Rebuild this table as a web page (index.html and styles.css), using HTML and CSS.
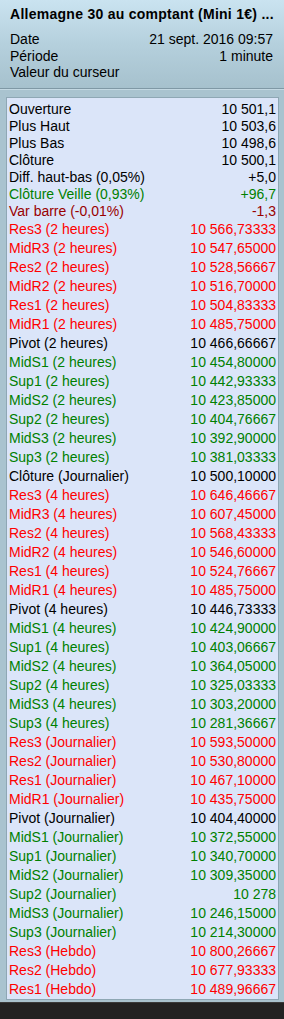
FILE: index.html
```html
<!DOCTYPE html>
<html>
<head>
<meta charset="utf-8">
<link rel="stylesheet" href="styles.css">
</head>
<body>
<div class="window">
  <div class="header">
    <div class="title">Allemagne 30 au comptant (Mini 1€) ...</div>
    <div class="hrow"><span>Date</span><span>21 sept. 2016 09:57</span></div>
    <div class="hrow"><span>Période</span><span>1 minute</span></div>
    <div class="hrow"><span>Valeur du curseur</span><span></span></div>
  </div>
  <div class="panel">
    <div class="box">
      <div class="row s k"><span>Ouverture</span><span>10 501,1</span></div>
      <div class="row s k"><span>Plus Haut</span><span>10 503,6</span></div>
      <div class="row s k"><span>Plus Bas</span><span>10 498,6</span></div>
      <div class="row s k"><span>Clôture</span><span>10 500,1</span></div>
      <div class="row s k"><span>Diff. haut-bas (0,05%)</span><span>+5,0</span></div>
      <div class="row s g"><span>Clôture Veille (0,93%)</span><span>+96,7</span></div>
      <div class="row s dr"><span>Var barre (-0,01%)</span><span>-1,3</span></div>
      <div class="row r"><span>Res3 (2 heures)</span><span>10 566,73333</span></div>
      <div class="row r"><span>MidR3 (2 heures)</span><span>10 547,65000</span></div>
      <div class="row r"><span>Res2 (2 heures)</span><span>10 528,56667</span></div>
      <div class="row r"><span>MidR2 (2 heures)</span><span>10 516,70000</span></div>
      <div class="row r"><span>Res1 (2 heures)</span><span>10 504,83333</span></div>
      <div class="row r"><span>MidR1 (2 heures)</span><span>10 485,75000</span></div>
      <div class="row k"><span>Pivot (2 heures)</span><span>10 466,66667</span></div>
      <div class="row g"><span>MidS1 (2 heures)</span><span>10 454,80000</span></div>
      <div class="row g"><span>Sup1 (2 heures)</span><span>10 442,93333</span></div>
      <div class="row g"><span>MidS2 (2 heures)</span><span>10 423,85000</span></div>
      <div class="row g"><span>Sup2 (2 heures)</span><span>10 404,76667</span></div>
      <div class="row g"><span>MidS3 (2 heures)</span><span>10 392,90000</span></div>
      <div class="row g"><span>Sup3 (2 heures)</span><span>10 381,03333</span></div>
      <div class="row k"><span>Clôture (Journalier)</span><span>10 500,10000</span></div>
      <div class="row r"><span>Res3 (4 heures)</span><span>10 646,46667</span></div>
      <div class="row r"><span>MidR3 (4 heures)</span><span>10 607,45000</span></div>
      <div class="row r"><span>Res2 (4 heures)</span><span>10 568,43333</span></div>
      <div class="row r"><span>MidR2 (4 heures)</span><span>10 546,60000</span></div>
      <div class="row r"><span>Res1 (4 heures)</span><span>10 524,76667</span></div>
      <div class="row r"><span>MidR1 (4 heures)</span><span>10 485,75000</span></div>
      <div class="row k"><span>Pivot (4 heures)</span><span>10 446,73333</span></div>
      <div class="row g"><span>MidS1 (4 heures)</span><span>10 424,90000</span></div>
      <div class="row g"><span>Sup1 (4 heures)</span><span>10 403,06667</span></div>
      <div class="row g"><span>MidS2 (4 heures)</span><span>10 364,05000</span></div>
      <div class="row g"><span>Sup2 (4 heures)</span><span>10 325,03333</span></div>
      <div class="row g"><span>MidS3 (4 heures)</span><span>10 303,20000</span></div>
      <div class="row g"><span>Sup3 (4 heures)</span><span>10 281,36667</span></div>
      <div class="row r"><span>Res3 (Journalier)</span><span>10 593,50000</span></div>
      <div class="row r"><span>Res2 (Journalier)</span><span>10 530,80000</span></div>
      <div class="row r"><span>Res1 (Journalier)</span><span>10 467,10000</span></div>
      <div class="row r"><span>MidR1 (Journalier)</span><span>10 435,75000</span></div>
      <div class="row k"><span>Pivot (Journalier)</span><span>10 404,40000</span></div>
      <div class="row g"><span>MidS1 (Journalier)</span><span>10 372,55000</span></div>
      <div class="row g"><span>Sup1 (Journalier)</span><span>10 340,70000</span></div>
      <div class="row g"><span>MidS2 (Journalier)</span><span>10 309,35000</span></div>
      <div class="row g"><span>Sup2 (Journalier)</span><span>10 278</span></div>
      <div class="row g"><span>MidS3 (Journalier)</span><span>10 246,15000</span></div>
      <div class="row g"><span>Sup3 (Journalier)</span><span>10 214,30000</span></div>
      <div class="row r"><span>Res3 (Hebdo)</span><span>10 800,26667</span></div>
      <div class="row r"><span>Res2 (Hebdo)</span><span>10 677,93333</span></div>
      <div class="row r"><span>Res1 (Hebdo)</span><span>10 489,96667</span></div>
    </div>
  </div>
  <div class="footer"></div>
</div>
</body>
</html>
```
FILE: styles.css
```css
html, body {
  margin: 0;
  padding: 0;
  background: #222222;
}
.window {
  width: 284px;
  height: 1019px;
  display: flex;
  flex-direction: column;
  font-family: "Liberation Sans", Arial, sans-serif;
  font-size: 14px;
  color: #000;
}
.header {
  height: 89px;
  box-sizing: border-box;
  padding: 6px 11px 0 10px;
  background: linear-gradient(to bottom, #cae3f0 0%, #b5d0dd 50%, #a6c1cd 100%);
  border-bottom: 1px solid #7f98a5;
}
.title {
  font-weight: bold;
  line-height: 16px;
  margin-bottom: 9px;
  white-space: nowrap;
  letter-spacing: 0.27px;
}
.hrow {
  display: flex;
  justify-content: space-between;
  line-height: 16.5px;
}
.panel {
  background: #a9c3cf;
  border-top: 1px solid #c3d8e2;
  padding: 7px 5px 2px 6px;
}
.box {
  background: #dbe5f9;
  border: 1px solid #8ea7b4;
  padding: 3px 2px 0 2px;
}
.row {
  display: flex;
  justify-content: space-between;
  height: 19px;
  line-height: 19px;
  white-space: nowrap;
}
.row.s {
  height: 17px;
  line-height: 17px;
}
.k { color: #000000; }
.g { color: #008000; }
.dr { color: #990000; }
.r { color: #ff0000; }
.footer {
  flex: 1;
  background: #222222;
  border-top: 1px solid #3a3a3a;
}
```
